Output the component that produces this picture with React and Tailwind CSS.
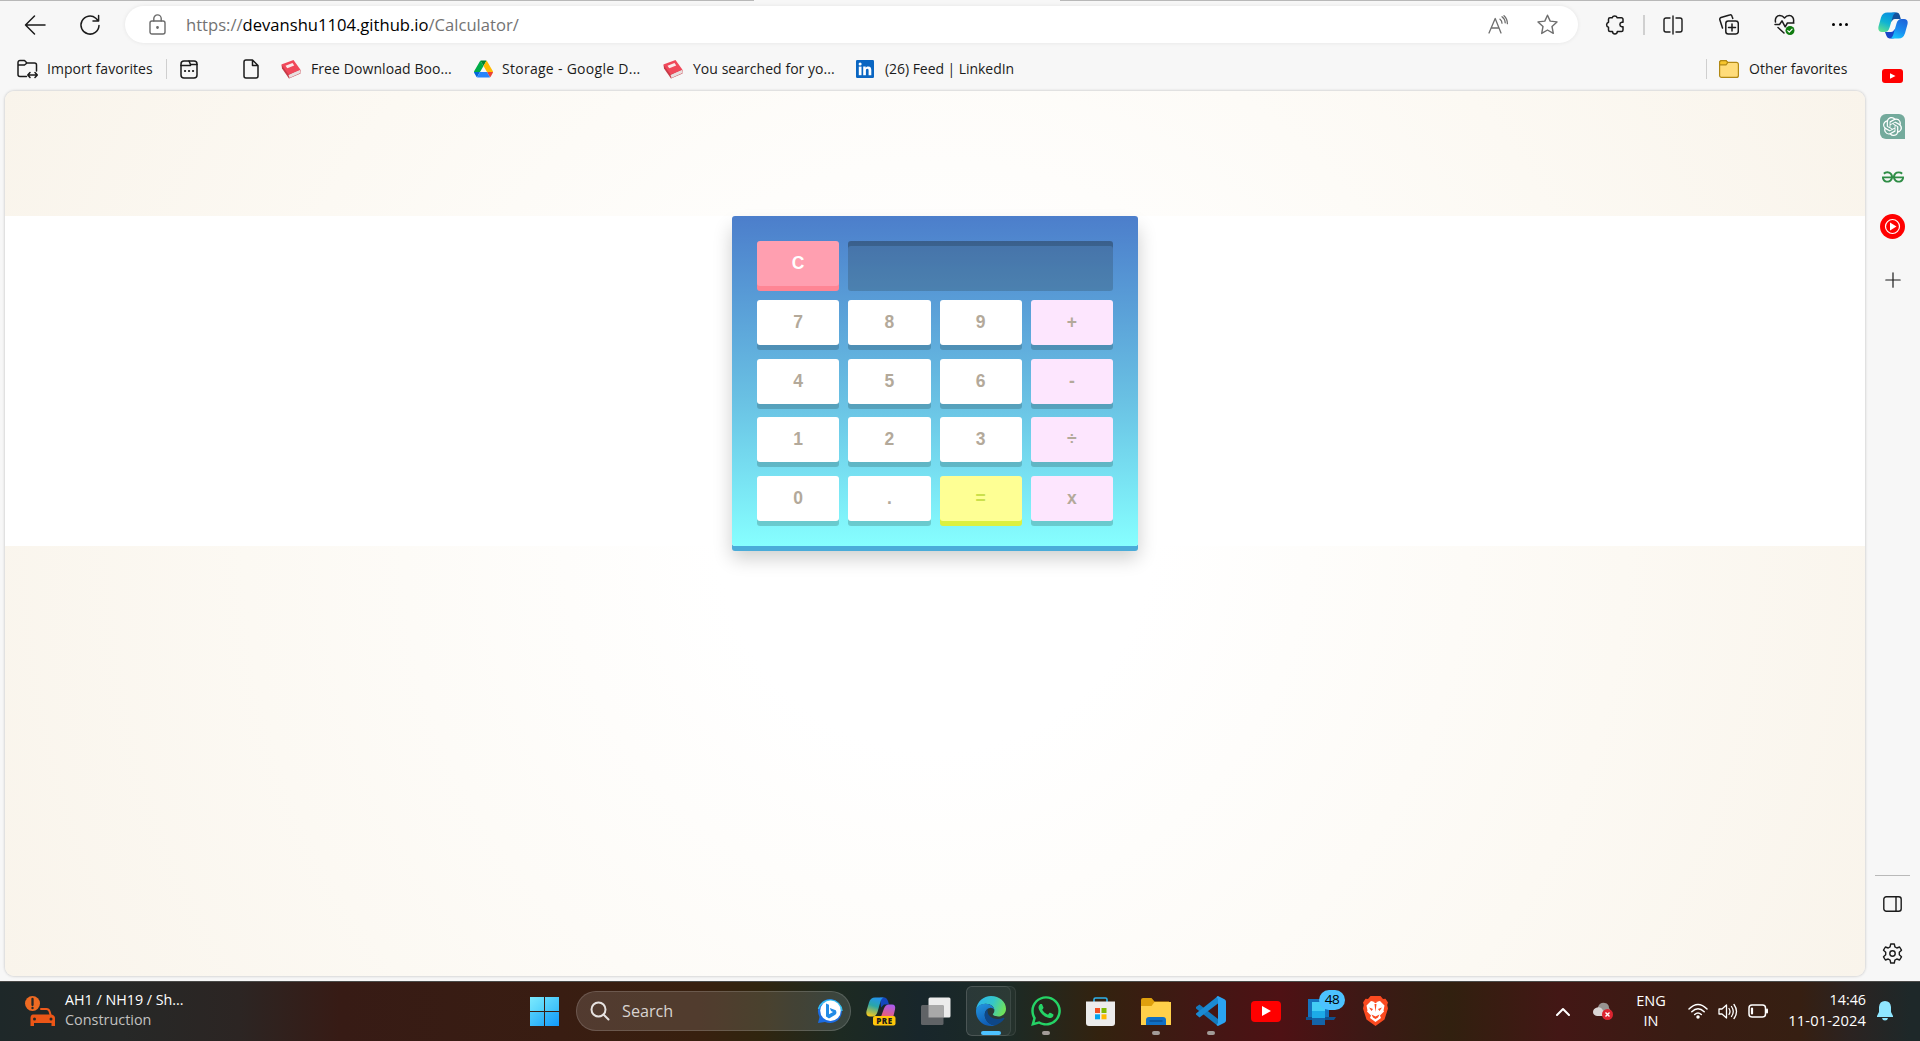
import React from "react";
import { FaWhatsapp } from "react-icons/fa";
import { SiOpenai, SiGeeksforgeeks } from "react-icons/si";

function Line({ className, box = "0 0 20 20", children, sw = 1.3 }) {
  return (
    <svg className={`shrink-0 ${className}`} viewBox={box} fill="none" stroke="currentColor" strokeWidth={sw} strokeLinecap="round" strokeLinejoin="round">
      {children}
    </svg>
  );
}

function BookIcon({ className }) {
  return (
    <svg viewBox="0 0 20 20" className={`h-5 w-5 shrink-0 ${className}`}>
      <path d="M0.5 6 L1 9.5 L8 19.5 L19.5 14.5 L19.5 11 Z" fill="#c73a47" />
      <path d="M7.5 16 L19 10.5 L19.5 14 L8.5 19 Z" fill="#e8dede" />
      <path d="M0.3 5.5 L12.5 1 L19.5 10.8 L7.5 15.5 Z" fill="#f0485a" />
      <path d="M4.5 6.8 L11.5 4 L13.2 6.5 L6.3 9.3 Z" fill="#fbe9ea" />
    </svg>
  );
}

function DriveIcon({ className }) {
  return (
    <svg viewBox="0 0 87.3 78" className={`h-[18px] w-[19px] shrink-0 ${className}`}>
      <path d="m6.6 66.85 3.85 6.65c.8 1.4 1.95 2.5 3.3 3.3l13.75-23.8h-27.5c0 1.55.4 3.1 1.2 4.5z" fill="#0066da" />
      <path d="m43.65 25-13.75-23.8c-1.35.8-2.5 1.9-3.3 3.3l-25.4 44a9.06 9.06 0 0 0 -1.2 4.5h27.5z" fill="#00ac47" />
      <path d="m73.55 76.8c1.35-.8 2.5-1.9 3.3-3.3l1.6-2.75 7.65-13.25c.8-1.4 1.2-2.95 1.2-4.5h-27.5l5.85 11.5z" fill="#ea4335" />
      <path d="m43.65 25 13.75-23.8c-1.35-.8-2.9-1.2-4.5-1.2h-18.5c-1.6 0-3.15.45-4.5 1.2z" fill="#00832d" />
      <path d="m59.8 53h-32.3l-13.75 23.8c1.35.8 2.9 1.2 4.5 1.2h50.8c1.6 0 3.15-.45 4.5-1.2z" fill="#2684fc" />
      <path d="m73.4 26.5-12.7-22c-.8-1.4-1.95-2.5-3.3-3.3l-13.75 23.8 16.15 28h27.45c0-1.55-.4-3.1-1.2-4.5z" fill="#ffba00" />
    </svg>
  );
}

function CopilotIcon({ className }) {
  return (
    <svg viewBox="0 0 30 27" className={`shrink-0 ${className}`}>
      <defs>
        <linearGradient id="cpA" x1="0.6" y1="0" x2="0.2" y2="1">
          <stop offset="0" stopColor="#0a8fe0" /><stop offset="0.5" stopColor="#0fb3d4" /><stop offset="1" stopColor="#5fe08f" />
        </linearGradient>
        <linearGradient id="cpB" x1="0.8" y1="0" x2="0.4" y2="1">
          <stop offset="0" stopColor="#1f63d8" /><stop offset="0.6" stopColor="#1a8df0" /><stop offset="1" stopColor="#17c0fb" />
        </linearGradient>
      </defs>
      <path d="M16 0.5 H19 Q21 0.8 21.7 3 L22.8 7 H17 Q14.5 7 13.7 10 L11 3 Q12 0.5 16 0.5Z" fill="#15539d" />
      <path d="M7 20 H13 Q15.5 20 16.4 17 L19 23 Q18 26.5 14 26.5 H11.5 Q9.3 26.3 8.5 24Z" fill="#1746c8" />
      <path d="M9.5 0.5 H18.5 Q15.8 1 14.8 4.5 L11.6 15.5 Q10.3 20 6.7 20 H4 Q-0.5 20 0.5 14.5 L3 5.5 Q4.5 0.5 9.5 0.5Z" fill="url(#cpA)" />
      <path d="M23.4 7 H26 Q30.5 7 29.5 12.3 L27 21.3 Q25.4 26.5 20.5 26.5 H11.7 Q14.3 26 15.3 22.4 L18.5 11.5 Q19.7 7 23.4 7Z" fill="url(#cpB)" />
    </svg>
  );
}

function Toolbar() {
  return (
    <div className="flex h-[49px] shrink-0 items-center text-[#1b1b1b]">
      <Line className="ml-[24px] h-[22px] w-[22px]" box="0 0 22 22" sw={1.5}><path d="M1.5 11H21M10.5 2 1.5 11l9 9" /></Line>
      <Line className="ml-[33px] h-[22px] w-[22px]" box="0 0 22 22" sw={1.5}><path d="M20 11.5A9 9 0 1 1 16.8 4.2L19.6 7M19.6 1.5V7H14" /></Line>
      <div className="ml-[24px] flex h-[37px] w-[1453px] shrink-0 items-center rounded-full bg-white shadow-[0_0_4px_rgba(0,0,0,0.08)]">
        <Line className="ml-[24px] h-[21px] w-[17px] text-[#6b6b6b]" box="0 0 17 21" sw={1.4}>
          <rect x="1" y="7" width="15" height="13" rx="2" /><path d="M4.8 7V4.6a3.7 3.7 0 0 1 7.4 0V7" /><circle cx="8.5" cy="13.5" r="0.7" fill="currentColor" />
        </Line>
        <div className="ml-[20px] mt-px whitespace-pre text-[16.6px] leading-none text-[#737373]">https://<span className="text-black">devanshu1104.github.io</span>/Calculator/</div>
        <Line className="ml-auto h-[20px] w-[21px] text-[#6e6e6e]" box="0 0 21 20" sw={1.3}>
          <path d="M1 18 7.2 3.5 13 18M3.2 13h7.8M12 4.2q2 1.5 2 4M14 1.8q3 2.2 3.2 6M16 .7q3.4 3 3.4 8" />
        </Line>
        <Line className="ml-[28px] mr-[20px] h-[21px] w-[21px] text-[#6e6e6e]" box="0 0 21 21" sw={1.4}>
          <path d="M10.5 1.2 13.2 7.1 20 7.9 15 12.5 16.3 19.4 10.5 16 4.7 19.4 6 12.5 1 7.9 7.8 7.1Z" />
        </Line>
      </div>
      <Line className="ml-[27px] h-[21px] w-[20px]" box="0 0 20 21" sw={1.5}>
        <path d="M5 3.8h2.2a2.6 2.6 0 0 1 5 0h4.3a1.5 1.500 0 0 1 1.500 1.500v3h-1.300a2.300 2.300 0 0 0 0 4.500H18V16a1.500 1.500 0 0 1-1.500 1.500h-4.200a2.400 2.400 0 0 1-4.800 0H5A1.500 1.500 0 0 1 3.500 16v-2.700a2.600 2.600 0 0 1 0-5V5.300A1.500 1.500 0 0 1 5 3.800" />
      </Line>
      <div className="ml-[18px] h-5 w-[2px] bg-[#d0d0d0]" />
      <Line className="ml-[18px] h-[20px] w-[20px]" sw={1.4}><path d="M10 1v18M7 3H3a2 2 0 0 0-2 2v10a2 2 0 0 0 2 2h4M13 3h4a2 2 0 0 1 2 2v10a2 2 0 0 1-2 2h-4" /></Line>
      <Line className="ml-[36px] h-[21px] w-[20px]" box="0 0 20 21" sw={1.5}>
        <rect x="6.8" y="7" width="12.5" height="13" rx="2.5" /><path d="M13 10v7M9.5 13.5h7M13.8 4.4 13 2.2A1.9 1.9 0 0 0 10.6 1L2 3.5A1.8 1.8 0 0 0 .9 5.9L3.5 14" />
      </Line>
      <svg viewBox="0 0 21 21" className="ml-[35px] h-[21px] w-[21px] shrink-0" fill="none" stroke="#1b1b1b" strokeWidth="1.5" strokeLinejoin="round" strokeLinecap="round">
        <path d="M1.5 8C.7 4 3 1.5 5.8 1.5 8 1.5 9.5 2.7 10.5 4c1-1.3 2.5-2.5 4.7-2.5C18 1.5 20.3 4 19.5 8M1 10.5h4.5L8 6.8l3.2 6L13.4 9h6.5M4 13.5l6 5.5" />
        <circle cx="16" cy="16.5" r="4.5" fill="#107c10" stroke="none" /><path d="M13.8 16.6l1.5 1.5 2.8-3" stroke="#fff" strokeWidth="1.2" />
      </svg>
      <div className="ml-[37px] flex gap-[3.5px]">
        <span className="h-[3px] w-[3px] rounded-full bg-black" /><span className="h-[3px] w-[3px] rounded-full bg-black" /><span className="h-[3px] w-[3px] rounded-full bg-black" />
      </div>
    </div>
  );
}

function Bookmarks() {
  return (
    <div className="flex h-[42px] shrink-0 items-center whitespace-nowrap pb-[2px] text-[14px] leading-none text-[#1b1b1b]">
      <Line className="ml-[17px] h-[20px] w-[21px]" box="0 0 21 20" sw={1.5}>
        <path d="M9.5 17.5H3a2 2 0 0 1-2-2v-12a2 2 0 0 1 2-2h4.5L10 4h7.5a2 2 0 0 1 2 2v6M1 6h6.5L10 4M11 16h9M13 13.5 10.8 16l2.2 2.5M18 13.5l2.3 2.5-2.3 2.5" />
      </Line>
      <span className="ml-[9px] w-[106px] tracking-[0.05px]">Import favorites</span>
      <div className="ml-[13px] h-5 w-px bg-[#cfcfcf]" />
      <Line className="ml-[13px] h-[19px] w-[18px]" box="0 0 18 19" sw={1.5}>
        <rect x="1" y="1" width="16" height="17" rx="3" /><path d="M1 5.5h9.5M9 1l1.5 3.5H17" /><path d="M5 11h.1M9 11h.1M13 11h.1" strokeWidth="2.2" />
      </Line>
      <Line className="ml-[45px] h-[20px] w-[16px]" box="0 0 16 20" sw={1.5}><path d="M9.5 1H3a2 2 0 0 0-2 2v14a2 2 0 0 0 2 2h10a2 2 0 0 0 2-2V6.5ZM9.5 1v5.5H15" /></Line>
      <BookIcon className="ml-[22px]" />
      <span className="ml-[10px] w-[142px] tracking-[0.08px]">Free Download Boo...</span>
      <DriveIcon className="ml-[21px]" />
      <span className="ml-[9px] w-[141px] tracking-[0.28px]">Storage - Google D...</span>
      <BookIcon className="ml-[20px]" />
      <span className="ml-[10px] w-[143px] tracking-[0.04px]">You searched for yo...</span>
      <svg viewBox="0 0 18 18" className="ml-[20px] h-[18px] w-[18px] shrink-0">
        <rect width="18" height="18" rx="1.2" fill="#0a66c2" />
        <circle cx="4.1" cy="4" r="1.5" fill="#fff" /><rect x="2.8" y="6.6" width="2.7" height="8.6" fill="#fff" />
        <path d="M7.2 6.6h2.5v1.2c.5-.9 1.5-1.4 2.6-1.4 2.4 0 3 1.5 3 3.9v4.9h-2.7v-4.4c0-1.2-.2-2.1-1.3-2.1s-1.4.9-1.4 2.1v4.4H7.2Z" fill="#fff" />
      </svg>
      <span className="ml-[11px] tracking-[-0.05px]">(26) Feed | LinkedIn</span>
      <div className="ml-auto h-5 w-px bg-[#cfcfcf]" />
      <svg viewBox="0 0 20 18" className="ml-[12px] h-[18px] w-[20px] shrink-0" stroke="#b28914" strokeWidth="1.2">
        <path d="M.6 3v12.400a2 2 0 0 0 2 2h14.800a2 2 0 0 0 2-2V4.400a2 2 0 0 0-2-2H8.500L7 .6H2.600A2 2 0 0 0 .6 3Z" fill="#ffdc7a" />
        <path d="M.6 3A2 2 0 0 1 2.600.6H7l1.800 1.900L7 4.800H.6Z" fill="#f6c52c" />
      </svg>
      <span className="ml-[10px] mr-[18px] w-[99px]">Other favorites</span>
    </div>
  );
}

const WHITE = "bg-white text-[#b3a99a] shadow-[0_5px_0_rgba(0,10,5,0.18)]";
const PINK = "bg-[#fde6fe] text-[#b3a99a] shadow-[0_5px_0_rgba(0,10,5,0.18)]";
const YELLOW = "bg-[#feff94] text-[#cbe04c] shadow-[0_5px_0_#dcf03f]";
const KEYS = [
  ["7", WHITE], ["8", WHITE], ["9", WHITE], ["+", PINK],
  ["4", WHITE], ["5", WHITE], ["6", WHITE], ["-", PINK],
  ["1", WHITE], ["2", WHITE], ["3", WHITE], ["÷", PINK],
  ["0", WHITE], [".", WHITE], ["=", YELLOW], ["x", PINK],
];

function Calculator() {
  return (
    <div className="h-[330px] w-[406px] rounded-[3px] bg-linear-to-b from-[#4c7ecb] via-[#69c0e3] via-55% to-[#86ffff] px-[25px] pt-[25.4px] font-['Liberation_Sans',Arial,sans-serif] text-[17.5px] font-bold leading-[44px] shadow-[0_5px_0_#4aacd9,0_12px_19px_rgba(0,10,5,0.2)]">
      <div className="grid grid-cols-4 gap-x-[9px] gap-y-[13.6px] text-center">
        <div className="h-[45px] rounded-[3px] bg-[#ff9fb0] text-white shadow-[0_5px_0_#ff8594]">C</div>
        <div className="col-span-3 -mb-[5px] h-[50px] rounded-[3px] bg-[rgba(35,45,40,0.22)] shadow-[inset_0_5px_0_rgba(0,0,0,0.17)]" />
        {KEYS.map(([label, tone]) => (
          <div key={label} className={`h-[45px] rounded-[3px] ${tone}`}>{label}</div>
        ))}
      </div>
    </div>
  );
}

function Sidebar() {
  return (
    <div className="flex w-[54px] shrink-0 flex-col items-center pr-px text-[#1b1b1b]">
      <CopilotIcon className="mt-[12px] h-[27px] w-[30px]" />
      <div className="mt-[30px] flex h-[14px] w-[21px] items-center justify-center rounded-[3px] bg-[#f00]">
        <div className="h-[6px] w-[6px] bg-white [clip-path:polygon(0_0,100%_50%,0_100%)]" />
      </div>
      <div className="mt-[31px] flex h-[25px] w-[25px] items-center justify-center rounded-[6px] rounded-br-none bg-[#74aa9c] text-white"><SiOpenai size={19} /></div>
      <SiGeeksforgeeks className="mt-[27px] text-[#2f8d46]" size={22} />
      <svg viewBox="0 0 25 25" className="mt-[26px] h-[25px] w-[25px] shrink-0"><circle cx="12.500" cy="12.500" r="12.500" fill="#f00" /><circle cx="12.500" cy="12.500" r="7" fill="none" stroke="#fff" strokeWidth="1.200" /><path d="M10 8.500v8l6.500-4z" fill="#fff" /></svg>
      <Line className="mt-[33px] h-[16px] w-[16px]" box="0 0 16 16" sw={1.2}><path d="M8 .8v14.400M.8 8h14.400" /></Line>
      <div className="mt-auto h-px w-[35px] bg-[#b9b9b9]" />
      <Line className="mt-[20px] h-[16px] w-[19px]" box="0 0 19 16" sw={1.400}><rect x=".8" y=".8" width="17.400" height="14.400" rx="2.500" /><path d="M13 1v14" /></Line>
      <Line className="mb-[17px] mt-[31px] h-[21px] w-[21px]" box="0 0 21 21" sw={1.400}>
        <circle cx="10.500" cy="10.500" r="2.700" />
        <path d="M8.700 1h3.600l.6 2.900 1.900 1.100 2.800-1 1.900 3.200-2.200 2v2.600l2.200 2-1.900 3.200-2.800-1-1.900 1.100-.6 2.900H8.700l-.6-2.900L6.200 16l-2.800 1-1.900-3.200 2.200-2V9.200l-2.200-2L3.400 4l2.800 1 1.900-1.100Z" />
      </Line>
    </div>
  );
}

function Dot() {
  return <span className="absolute bottom-[1px] left-1/2 h-[4px] w-[8px] -translate-x-1/2 rounded-full bg-[#a29b98]" />;
}

function TaskIcon({ dot, children }) {
  return <div className="relative flex h-[50px] w-[55px] shrink-0 items-center justify-center">{children}{dot && <Dot />}</div>;
}

function EdgeIcon() {
  return (
    <svg viewBox="0 0 30 30" className="h-[30px] w-[30px] shrink-0">
      <defs>
        <linearGradient id="edTop" x1="0" y1="0.2" x2="1" y2="0.5"><stop offset="0" stopColor="#2bb5ee" /><stop offset="0.55" stopColor="#35c6c9" /><stop offset="1" stopColor="#6fe15a" /></linearGradient>
        <linearGradient id="edLeft" x1="0" y1="0" x2="0.4" y2="1"><stop offset="0" stopColor="#2497e0" /><stop offset="1" stopColor="#0f5cb4" /></linearGradient>
      </defs>
      <path d="M0 14C1 5.500 7.500 0 15 0c8.500 0 15 5.800 15 12.700 0 4.800-3.700 7.800-7.800 7.800-3.500 0-5.700-1.300-5.300-2.400.5-1 1.500-1.700 1.500-3.600C18.400 11 15 7.700 9.800 7.700 4 7.700.6 11.500 0 14Z" fill="url(#edTop)" />
      <path d="M0 15C0 10.700 4 7.700 9.500 7.700c5.300 0 8.700 3 8.900 6.500-1-2-3-2.600-4.500-2.300-3.500.6-5.600 4-5.100 8 .6 5.100 5 9 10.200 9.500-1.300.4-2.700.6-4 .6C6.500 30 0 23.500 0 15Z" fill="url(#edLeft)" />
      <path d="M11.800 12.700c-2 1.500-3.300 4.200-3 7.200.6 5.100 5 9.300 10.200 9.500 3.800-1 7.200-3.500 9.300-6.600.5-.8-.1-1.300-.8-1-6.500 3-14.500.3-15.700-5-.3-1.400-.3-2.800 0-4.100Z" fill="#0e4788" />
    </svg>
  );
}

function Taskbar() {
  return (
    <div className="flex h-[60px] w-full shrink-0 items-center border-t border-[#4a4a48] bg-[linear-gradient(90deg,#1e2829_0px,#262827_120px,#2c2523_240px,#371b15_340px,#391d12_560px,#38200f_700px,#30250f_760px,#1d2a22_840px,#18262b_920px,#1c2a25_1010px,#33220f_1100px,#421714_1200px,#4e1114_1280px,#3c1915_1370px,#31200f_1450px,#431715_1560px,#391c13_1680px,#361f12_1800px,#2b2321_1850px,#1e2829_1910px)] pb-px text-[14px] leading-none text-white">
      <svg viewBox="0 0 30 31" className="ml-[25px] h-[31px] w-[30px] shrink-0">
        <circle cx="7.500" cy="7.500" r="7.500" fill="#ee6a22" /><path d="M7.500 3v6" stroke="#262827" strokeWidth="2.300" strokeLinecap="round" /><circle cx="7.500" cy="12" r="1.200" fill="#262827" />
        <path d="M16 13h5.500q2.300 0 3 2.300l1.200 4" fill="none" stroke="#ee5a1c" strokeWidth="2" strokeLinecap="round" />
        <path d="M8 18.500h17.500q4.500 0 4.500 4V30h-3.500v-3H9v3H5.500v-7.500q0-4 2.500-4Z" fill="#ec5617" /><circle cx="9.500" cy="23" r="1.500" fill="#262827" /><circle cx="26" cy="23" r="1.500" fill="#262827" />
      </svg>
      <div className="-mt-[2px] ml-[10px] w-[125px] whitespace-nowrap leading-[20px]">
        <div className="text-[14.300px]">AH1 / NH19 / Sh...</div>
        <div className="text-[14.400px] text-[#c2c1c0]">Construction</div>
      </div>
      <div className="ml-[340px] grid h-[29px] w-[29px] shrink-0 grid-cols-2 gap-px">
        <div className="bg-linear-to-br from-[#7be9fd] to-[#4fd0fb]" /><div className="bg-linear-to-br from-[#60d9fd] to-[#38bdf9]" />
        <div className="bg-linear-to-br from-[#50cdfb] to-[#27adf8]" /><div className="bg-linear-to-br from-[#38baf9] to-[#109afb]" />
      </div>
      <div className="ml-[17px] mr-[2px] flex h-[40px] w-[275px] shrink-0 items-center rounded-full border border-white/15 bg-white/13">
        <Line className="ml-[13px] h-[20px] w-[20px] text-[#e6e2e0]" sw={2}><circle cx="8.500" cy="8.500" r="7" /><path d="m13.500 13.500 5 5" /></Line>
        <span className="ml-[12px] text-[16.200px] text-[#d9d4d1]">Search</span>
        <svg viewBox="0 0 26 26" className="ml-auto mr-[7px] h-[26px] w-[26px]">
          <path d="M1 25 2.500 19A12 12 0 1 1 8 24Z" fill="#1b6be0" /><path d="M1.500 11A12 12 0 0 1 25 13" fill="none" stroke="#35c0ee" strokeWidth="1.500" />
          <circle cx="13.500" cy="12.700" r="10.300" fill="#fff" />
          <path d="M9 5.500l3 1.200v9.600l4-2.300-2-1-1.200-3 6 2.200q1.500 2.800-.5 4.600L12 20.500l-3-2Z" fill="#238be6" />
        </svg>
      </div>
      <TaskIcon>
        <svg viewBox="0 0 30 29" className="h-[29px] w-[30px]">
          <defs><linearGradient id="preA" x1="0.6" y1="0" x2="0.3" y2="1"><stop offset="0" stopColor="#2493ed" /><stop offset="0.45" stopColor="#2aa6a8" /><stop offset="1" stopColor="#f4c91f" /></linearGradient>
          <linearGradient id="preB" x1="0.7" y1="0" x2="0.4" y2="1"><stop offset="0" stopColor="#a85af0" /><stop offset="1" stopColor="#f0606a" /></linearGradient></defs>
          <path d="M14 0.500H19Q21 1 22 4l1 3.500h-5l-3 3Z" fill="#1447bd" />
          <path d="M9 .5h9q-2.500.5-3.500 4L11.500 15q-1.500 4.500-5 4.500H4Q-.5 19.500.5 14L3 5.500Q4.500.5 9 .5Z" fill="url(#preA)" />
          <path d="M23 7.500h3q4 0 3 5L27 21H14.500L18 11.500q1.500-4 5-4Z" fill="url(#preB)" />
          <rect x="7" y="19" width="22.500" height="9.500" rx="2" fill="#ffc60a" />
          <text x="18.500" y="26.700" fontSize="8" fontWeight="800" textAnchor="middle" fill="#1b1b1b" letterSpacing=".5">PRE</text>
        </svg>
      </TaskIcon>
      <TaskIcon>
        <svg viewBox="0 0 30 28" className="h-[28px] w-[30px]"><rect x="7.500" y=".5" width="22" height="20" rx="1.500" fill="#ececec" /><rect x="0" y="8" width="22.500" height="20" rx="1.500" fill="#606366" /><path d="M7.500 8h15v12.500h-15Z" fill="#a9a9a9" /></svg>
      </TaskIcon>
      <div className="relative ml-[3px] mr-[2px] h-[50px] w-[50px] shrink-0 rounded-[6px] border border-white/8 bg-white/4">
        <div className="-ml-px -mt-px flex h-[50px] w-[45px] items-center rounded-[6px] border border-white/8 bg-white/4 pl-[9px]"><EdgeIcon /></div>
        <span className="absolute bottom-0 left-[14px] h-[4px] w-[20px] rounded-full bg-[#4cc2ff]" />
      </div>
      <TaskIcon dot><FaWhatsapp size={34} className="shrink-0 text-[#25d366]" /></TaskIcon>
      <TaskIcon>
        <svg viewBox="0 0 29 29" className="h-[29px] w-[29px]"><path d="M8 6V2.500Q8 1 9.500 1h10Q21 1 21 2.500V6" fill="none" stroke="#2fb2ec" strokeWidth="1.600" /><path d="M0 4.500h29V26q0 3-3 3H3q-3 0-3-3Z" fill="#ececec" /><path d="M9 11h5v5H9z" fill="#f25022" /><path d="M15.500 11h5v5h-5z" fill="#7fba00" /><path d="M9 17.300h5v5H9z" fill="#00a4ef" /><path d="M15.500 17.300h5v5h-5z" fill="#ffb900" /></svg>
      </TaskIcon>
      <TaskIcon dot>
        <svg viewBox="0 0 30 27" className="h-[27px] w-[30px]"><path d="M0 2Q0 0 2 0h8.500l3 3.500H28v8H0Z" fill="#dfa00d" /><path d="M0 8h10.500l3-4H30v23H0Z" fill="#ffd04a" /><path d="M5 27v-5q0-3 3-3h14q3 0 3 3v5Z" fill="#0f6fc5" /><path d="M8.500 23h13" stroke="#0a4a8c" strokeWidth="1.300" /></svg>
      </TaskIcon>
      <TaskIcon dot>
        <svg viewBox="0 0 30 30" className="h-[30px] w-[30px]"><path d="M0 11 3.500 8.500 22 23V30L0 12.500Z" fill="#1479bd" /><path d="M0 18.500 3.500 21.500 22 7.500V0L0 17.500Z" fill="#1b8ad2" /><path d="M22 0l6.500 3.200Q30 4 30 5.500v19Q30 26 28.500 26.800L22 30 20.500 29 22 27V3l-1.500-2Z" fill="#2ba3f1" /></svg>
      </TaskIcon>
      <TaskIcon>
        <div className="flex h-[21px] w-[30px] items-center justify-center rounded-[4px] bg-[#f00]"><div className="ml-[2px] h-[10px] w-[9px] bg-white [clip-path:polygon(0_0,100%_50%,0_100%)]" /></div>
      </TaskIcon>
      <TaskIcon>
        <svg viewBox="0 0 30 27" className="h-[27px] w-[30px]"><path d="M2 1h21v18H2z" fill="#1572bd" /><path d="M0 19h30l-2 3H0Z" fill="#0f5290" /><path d="M6 4h13v16H6z" fill="#43cdf5" /><path d="M6 13h13v7H6z" fill="#1cabe8" /><path d="M6 20h13v7H6z" fill="#1463a8" /></svg>
        <span className="absolute left-[26px] top-[4px] flex h-[20px] w-[26px] items-center justify-center rounded-full bg-[#4cc2ff] text-[13.500px] tracking-[-0.500px] text-black">48</span>
      </TaskIcon>
      <TaskIcon>
        <svg viewBox="0 0 25 30" className="h-[30px] w-[25px]"><path d="M7.500 0h10l2.500 3 2.500-.3L25 6.500l-.8 2.500.8 3.500-3.500 11L12.500 30 3.500 23.500 0 12.500.8 9 0 6.500 2.500 2.700 5 3Z" fill="#fb4a20" /><path d="M8 5l4.500 1L17 5l4.500 4.500-1 5 .5 1-4 4 1 2.500-5.500 4-5.500-4 1-2.500-4-4 .5-1-1-5Z" fill="#fff" /><path d="M6 11.500l4 1.500-1.500 2ZM19 11.500 15 13l1.500 2ZM11.500 8l1 8 1-8ZM8.500 18.500l4 2 4-2-1.500 3-2.500 1.500-2.500-1.500ZM10 5.500l2.500 1.800L15 5.500Z" fill="#fb4a20" /></svg>
      </TaskIcon>
      <div className="ml-auto flex items-center">
        <Line className="h-[9px] w-[14px]" box="0 0 14 9" sw={2}><path d="m1 8 6-6 6 6" /></Line>
        <svg viewBox="0 0 20 18" className="ml-[23px] h-[18px] w-[20px]"><path d="M5 5Q7 0 12 1q4 .8 4 5l2 3-3 5-10-2Z" fill="#989391" /><path d="M4 14Q0 13 0 10q0-3.500 4-4.500 4-1 6 3l3 1v4.500Z" fill="#d9d5d4" /><circle cx="14.500" cy="12.500" r="5.500" fill="#dc2430" /><path d="m12.500 10.500 4 4m0-4-4 4" stroke="#fff" strokeWidth="1.400" /></svg>
        <div className="-mt-px ml-[22px] w-[32px] text-center text-[14.500px] leading-[20px]"><div>ENG</div><div>IN</div></div>
        <Line className="ml-[21px] h-[16px] w-[20px]" box="0 0 20 16" sw={1.500}><path d="M1 6q9-9 18 0M3.800 8.800q6.200-6 12.400 0M6.700 11.500q3.300-3 6.600 0" /><circle cx="10" cy="14" r="1" fill="currentColor" /></Line>
        <Line className="ml-[10px] h-[17px] w-[20px]" box="0 0 20 17" sw={1.300}><path d="M1 6h3l4.500-4v13L4 11H1ZM11 5.500q2 3 0 6M13.500 3.500q3.500 5 0 10M16 1.500q5 7 0 14" /></Line>
        <Line className="ml-[10px] h-[14px] w-[20px]" box="0 0 20 14" sw={1.500}><rect x="1" y="1" width="16.500" height="12" rx="3" /><path d="M19 5.500v3" strokeWidth="2" /><path d="M4 4.500v5" strokeWidth="2.200" /></Line>
        <div className="-mt-[2px] ml-[18px] w-[80px] text-right text-[14.300px] leading-[20px]"><div>14:46</div><div className="-ml-[4px] whitespace-nowrap text-[14.700px] tracking-[0.100px]">11-01-2024</div></div>
        <svg viewBox="0 0 16 20" className="ml-[11px] mr-[27px] h-[20px] w-[16px]"><path d="M8 0q5.500 0 6 6v5l2 4v1H0v-1l2-4V6Q2.500 0 8 0ZM5 17h6q-.5 2.500-3 2.500T5 17Z" fill="#8fe6ff" /></svg>
      </div>
    </div>
  );
}

export default function App() {
  return (
    <div className="flex h-[1041px] w-[1920px] flex-col overflow-hidden bg-[#f7f7f7] font-['Open_Sans','Noto_Sans',sans-serif]">
      <div className="relative flex h-[981px] shrink-0">
        <div className="absolute left-0 top-0 h-px w-[754px] bg-[#b8b8b8]" />
        <div className="absolute right-0 top-0 h-px w-[860px] bg-[#b8b8b8]" />
        <div className="flex w-[1866px] shrink-0 flex-col">
          <Toolbar />
          <Bookmarks />
          <div className="ml-[5px] h-[885px] w-[1860px] overflow-hidden rounded-[9px] bg-[radial-gradient(circle_at_50%_50%,#fff_21%,#fefdfb_36%,#fcf9f3_67%,#f9f4eb_100%)] pt-[125px] shadow-[0_0_3px_rgba(0,0,0,0.25)]">
            <div className="relative flex h-[330px] justify-center bg-white"><Calculator /></div>
          </div>
        </div>
        <Sidebar />
      </div>
      <Taskbar />
    </div>
  );
}
